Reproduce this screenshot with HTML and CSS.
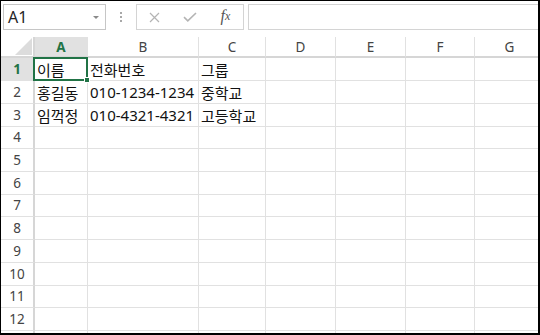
FILE: index.html
```html
<!DOCTYPE html>
<html lang="ko">
<head>
    <meta charset="UTF-8">
    <title>Sheet1</title>
    <link rel="stylesheet" href="styles.css">
</head>
<body>
    <div class="window">
        <div class="toolbar">
            <div class="namebox"><span>A1</span><span class="caret"></span></div>
            <div class="grip"><i></i><i></i><i></i></div>
            <div class="fbuttons">
                <span class="fbtn">
                    <svg width="11" height="11" viewBox="0 0 11 11"><path d="M1 1L10 10M10 1L1 10" stroke="#b4b4b4" stroke-width="1.2" fill="none"/></svg>
                </span>
                <span class="fbtn">
                    <svg width="14" height="10" viewBox="0 0 14 10"><path d="M1 5.2L4.8 8.8L13 1" stroke="#b4b4b4" stroke-width="1.6" fill="none"/></svg>
                </span>
                <span class="fbtn fx">f<small>x</small></span>
            </div>
            <div class="formula"></div>
        </div>

        <div class="sheet">
            <div class="row head">
                <div class="corner"><span class="tri"></span></div>
                <div class="on">A</div><div>B</div><div>C</div><div>D</div><div>E</div><div>F</div><div>G</div>
            </div>
            <div class="row">
                <div class="rh on">1</div>
                <div class="cell active">이름<span class="sel"><span class="handle"></span></span></div>
                <div class="cell">전화번호</div><div class="cell">그룹</div><div></div><div></div><div></div><div></div>
            </div>
            <div class="row">
                <div class="rh">2</div>
                <div class="cell">홍길동</div><div class="cell">010-1234-1234</div><div class="cell">중학교</div><div></div><div></div><div></div><div></div>
            </div>
            <div class="row">
                <div class="rh">3</div>
                <div class="cell">임꺽정</div><div class="cell">010-4321-4321</div><div class="cell">고등학교</div><div></div><div></div><div></div><div></div>
            </div>
            <div class="row"><div class="rh">4</div><div></div><div></div><div></div><div></div><div></div><div></div><div></div></div>
            <div class="row"><div class="rh">5</div><div></div><div></div><div></div><div></div><div></div><div></div><div></div></div>
            <div class="row"><div class="rh">6</div><div></div><div></div><div></div><div></div><div></div><div></div><div></div></div>
            <div class="row"><div class="rh">7</div><div></div><div></div><div></div><div></div><div></div><div></div><div></div></div>
            <div class="row"><div class="rh">8</div><div></div><div></div><div></div><div></div><div></div><div></div><div></div></div>
            <div class="row"><div class="rh">9</div><div></div><div></div><div></div><div></div><div></div><div></div><div></div></div>
            <div class="row"><div class="rh">10</div><div></div><div></div><div></div><div></div><div></div><div></div><div></div></div>
            <div class="row"><div class="rh">11</div><div></div><div></div><div></div><div></div><div></div><div></div><div></div></div>
            <div class="row"><div class="rh">12</div><div></div><div></div><div></div><div></div><div></div><div></div><div></div></div>
            <div class="row"><div class="rh"></div><div></div><div></div><div></div><div></div><div></div><div></div><div></div></div>
        </div>
    </div>
</body>
</html>
```

FILE: styles.css
```css
* { margin: 0; padding: 0; box-sizing: border-box; }
html, body { background: #fff; }
body { font-family: "Noto Sans", "Noto Sans CJK KR", sans-serif; color: #222; }

.window {
    width: 540px; height: 335px; overflow: hidden; background: #fff;
    border-style: solid; border-color: #000; border-width: 1px 2px 2px 1px;
}

/* formula bar */
.toolbar { display: flex; align-items: flex-start; height: 36px; padding: 3px 0 0 2px; }
.namebox {
    width: 103px; height: 26px; border: 1px solid #c6c6c6; display: flex; align-items: center; justify-content: space-between;
    padding: 0 6px 0 4px; font-size: 16px; color: #262626;
}
.caret { border-left: 3px solid transparent; border-right: 3px solid transparent; border-top: 3px solid #8a8a8a; }
.grip { width: 30px; height: 26px; display: flex; flex-direction: column; align-items: center; justify-content: center; gap: 2px; }
.grip i { width: 2px; height: 2px; background: #a8a8a8; }
.fbuttons { width: 108px; height: 26px; border: 1px solid #d4d4d4; display: flex; }
.fbtn { flex: 1; display: flex; align-items: center; justify-content: center; }
.fx { font-family: "Liberation Serif", serif; font-style: italic; font-size: 16px; color: #555; padding-bottom: 2px; }
.fx small { font-size: 12px; }
.formula { flex: 1; height: 26px; margin-left: 4px; border: 1px solid #d4d4d4; border-right: none; }

/* grid */
.row {
    display: grid; grid-template-columns: 34px 53px 111px 67px 70px 70px 69px 70px; height: 22.75px;
}
.row > div { border-right: 1px solid #e1e1e1; border-bottom: 1px solid #e1e1e1; }
.row.head { height: 21px; }
.row.head > div {
    border-bottom: 2px solid #d6d6d6; display: flex; align-items: center; justify-content: center;
    font-size: 13.5px; color: #444;
}
.row.head > .on { background: #e1e1e1; color: #217346; font-weight: bold; }
.row.head > .corner { justify-content: flex-end; align-items: flex-end; padding: 0 1px 1px 0; border-right: 2px solid #d6d6d6; }
.tri { width: 0; height: 0; border-left: 17px solid transparent; border-bottom: 17px solid #dcdcdc; }

.row > .rh {
    border-right: 2px solid #d6d6d6; display: flex; align-items: center; justify-content: center;
    font-size: 13.5px; color: #444;
}
.row > .rh.on { background: #e1e1e1; color: #217346; font-weight: bold; }

.cell { display: flex; align-items: center; padding: 1px 0 0 2px; font-size: 15px; color: #111; white-space: nowrap; }
.cell.active { position: relative; }
.sel { position: absolute; top: -1px; left: -2px; right: -1px; bottom: -1px; border: 2px solid #217346; }
.handle { position: absolute; right: -4px; bottom: -4px; width: 6px; height: 6px; background: #217346; border: 1px solid #fff; }
```
